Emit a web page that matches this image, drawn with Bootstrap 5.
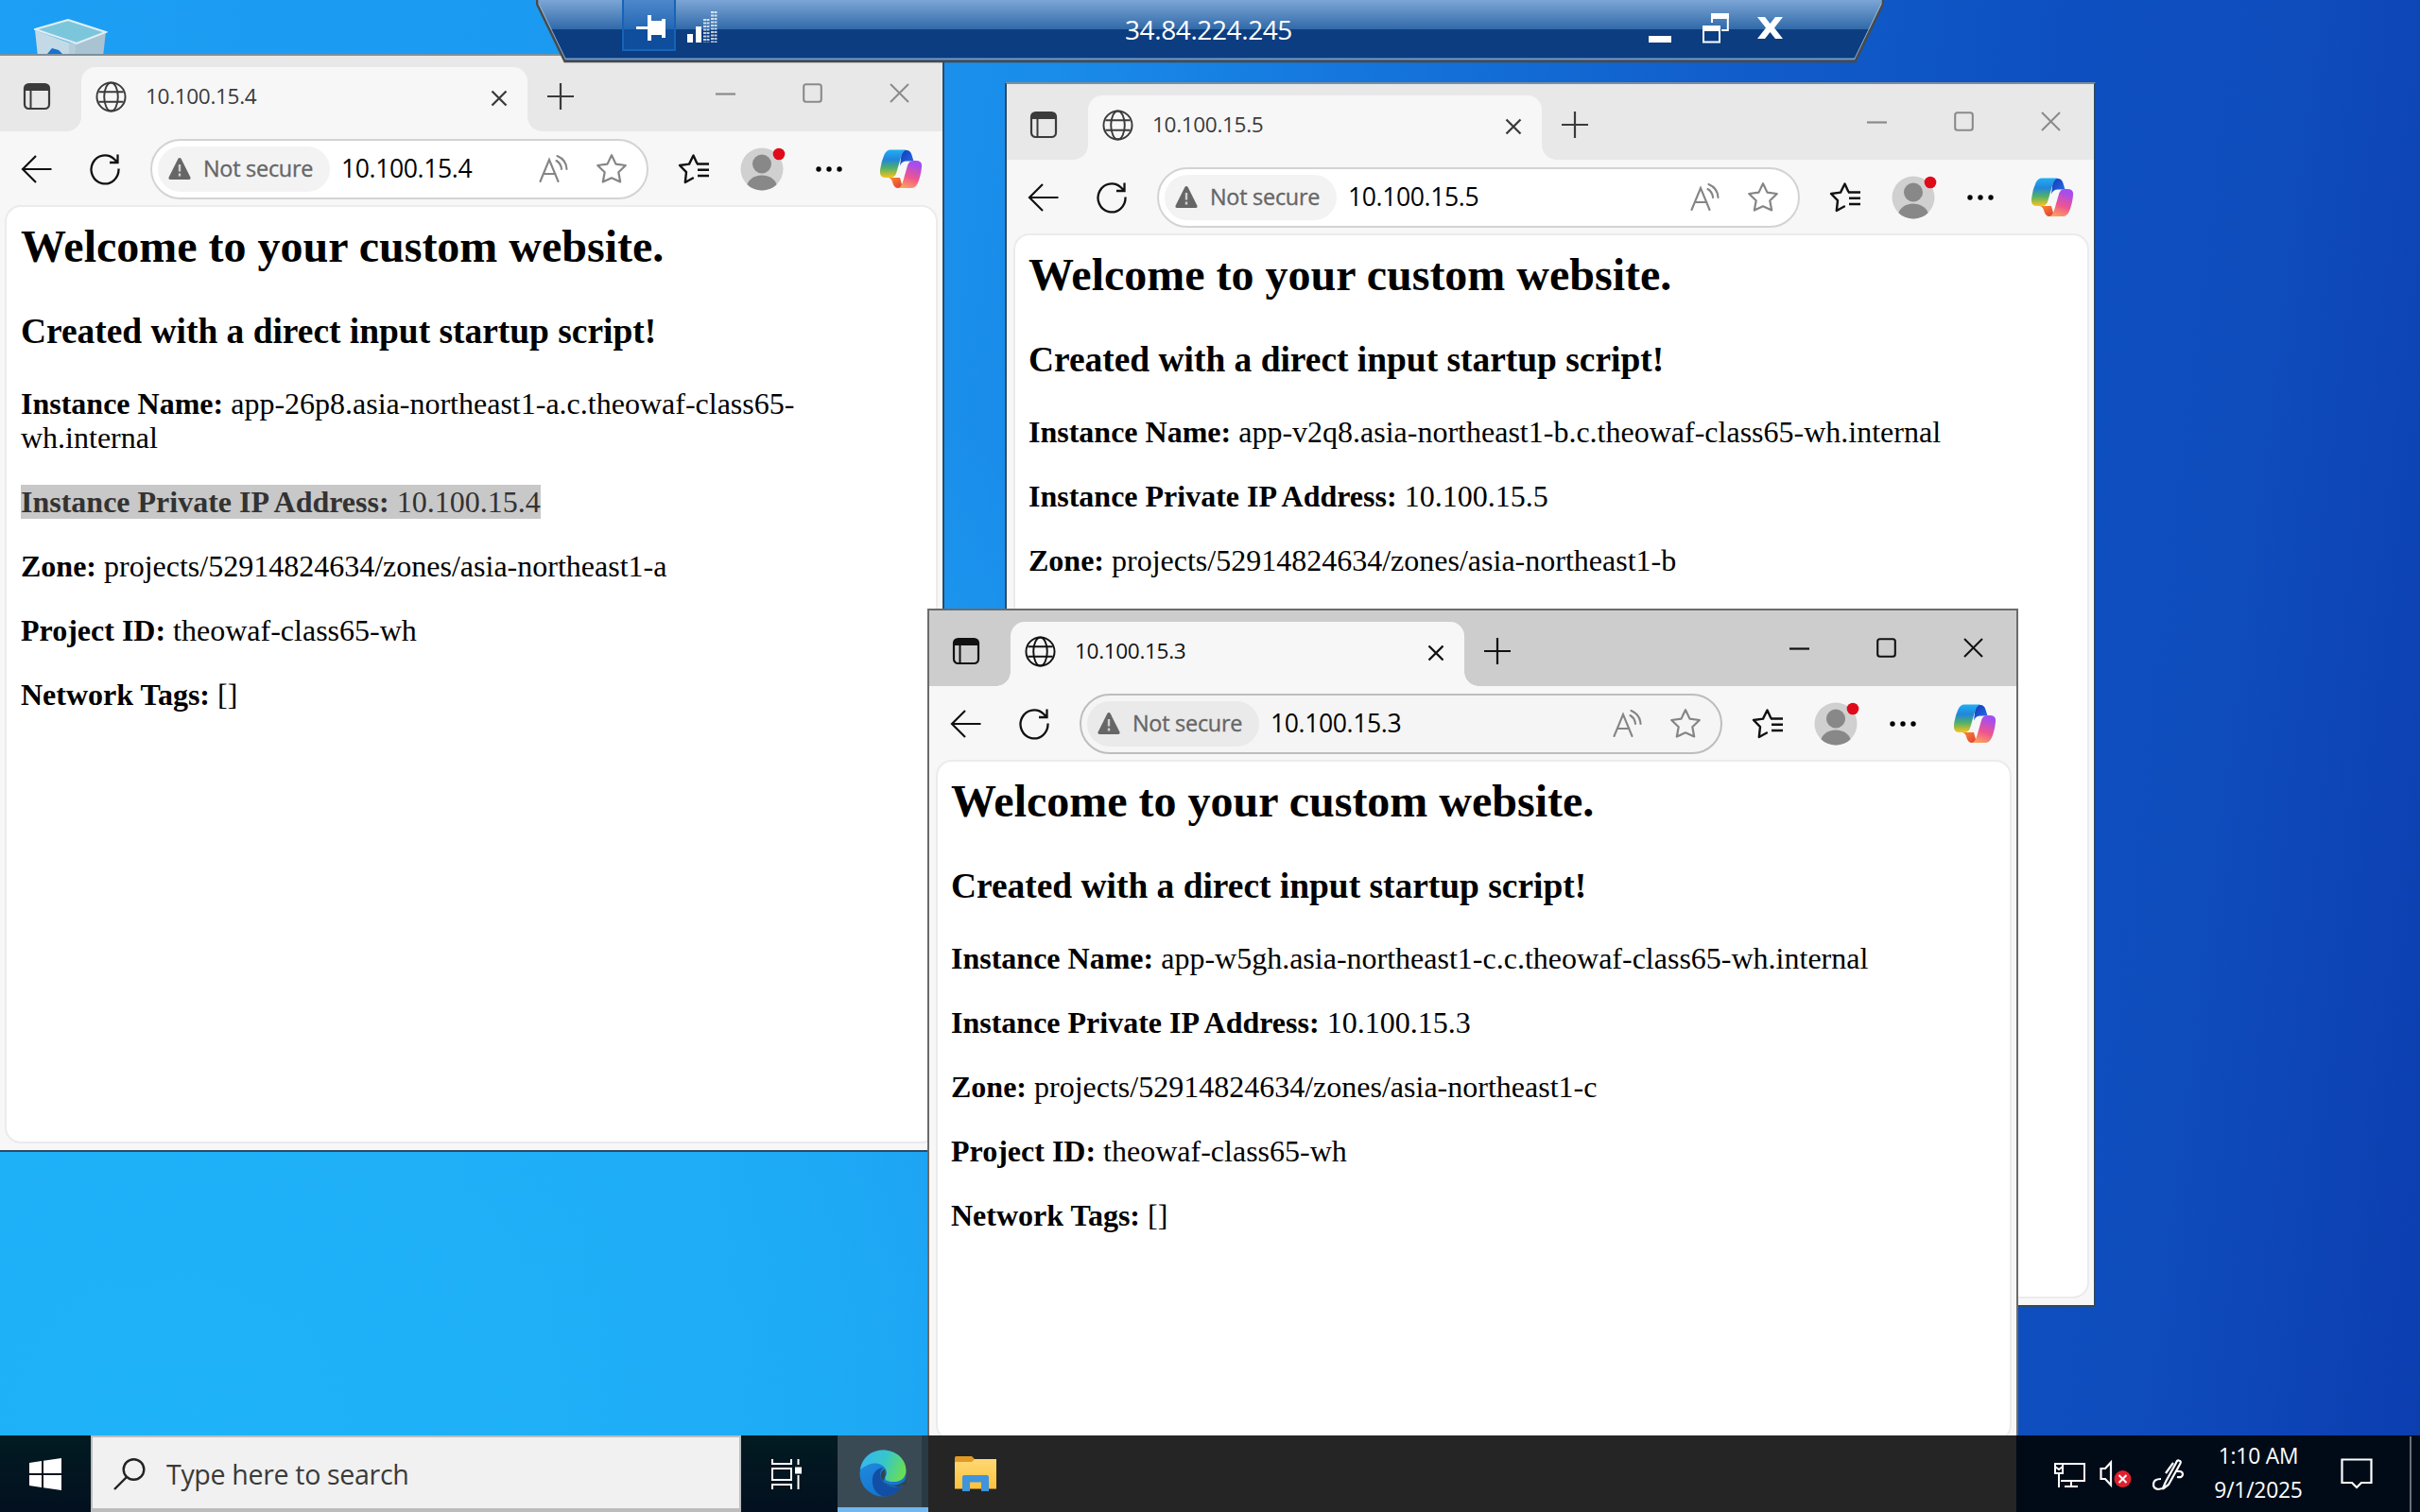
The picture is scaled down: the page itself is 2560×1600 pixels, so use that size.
<!DOCTYPE html>
<html lang="en">
<head>
<meta charset="utf-8">
<meta name="viewport" content="width=device-width, initial-scale=1">
<title>34.84.224.245</title>
<link href="https://cdn.jsdelivr.net/npm/bootstrap@5.3.0/dist/css/bootstrap.min.css" rel="stylesheet">
<style>
  body { width: 2560px; height: 1600px; overflow: hidden; font-family: "Open Sans", "Noto Sans", sans-serif; }
  svg { display: block; flex: none; }
  .desktop { width: 2560px; height: 1519px;
    background:
      radial-gradient(ellipse 1500px 1250px at 200px 1500px, rgba(31,180,249,.95) 0, rgba(31,178,248,.8) 45%, rgba(32,176,248,0) 100%),
      linear-gradient(97deg, #1c9ff4 0%, #1b98f0 28%, #1a8cea 41%, #1577dd 52%, #115fcc 66%, #0d4fc0 80%, #0f4dbd 88%, #0c3eb0 100%); }

  /* desktop windows */
  .win { position: absolute; border: 2px solid #2c4a66; border-top-color: #7d8f9c; background: #f7f7f7; color: #3b3b3b; --strip: #e8e8e8; --ctl: #8a8a8a; }
  .win-a { left: -2px; top: 57px; width: 1001px; height: 1162px; --tabw: 472px; }
  .win-b { left: 1063px; top: 87px; width: 1154px; height: 1296px; --tabw: 480px; }
  .win-c { left: 981px; top: 644px; width: 1154px; height: 890px; border-color: #6b6b6b; color: #111; --strip: #cdcdcd; --ctl: #111; --tabw: 480px; }
  .strip { height: 80px; background: var(--strip); padding-left: 24px; }
  .tab-icon { width: 62px; padding-top: 6px; }
  .tab-main { position: relative; width: var(--tabw); height: 68px; background: #f7f7f7; border-radius: 15px 15px 0 0; padding: 0 21px 6px 15px; font-size: 22.6px; letter-spacing: -.35px; }
  .tab-main::before, .tab-main::after { content: ""; position: absolute; bottom: 0; width: 15px; height: 15px; }
  .tab-main::before { left: -15px; background: radial-gradient(circle at 0 0, transparent 14.5px, #f7f7f7 15px); }
  .tab-main::after { right: -15px; background: radial-gradient(circle at 100% 0, transparent 14.5px, #f7f7f7 15px); }
  .plus { margin: 5px 0 0 21px; }
  .tab-x { margin-top: 4px; }
  .winctl { color: var(--ctl); gap: 71px; padding: 0 35px 2px 0; }
  .tools { height: 78px; padding: 1px 22px 0 22px; color: #111; }
  .reload { margin-left: 39px; }
  .who { margin: 0 8px 0 32px; }
  .copilot { margin-left: 40px; }
  .omni { height: 64px; margin-left: 31px; margin-right: 31px; border: 2px solid #d3d3d3; border-radius: 32px; background: #fff; padding: 0 20px 0 6px; }
  .chip { height: 48px; width: 182px; border-radius: 24px; background: #f3f3f3; color: #666; font-size: 23.4px; -webkit-text-stroke: .35px #666; letter-spacing: -.25px; padding-left: 11px; gap: 13px; }
  .win-c .omni { background: #f5f5f5; border-color: #bdbdbd; }
  .win-c .chip { background: #eaeaea; }
  .url { font-size: 26.6px; letter-spacing: -.4px; margin-left: 12px; color: #000; }
  .gray { color: #858585; }
  .page { margin: 0 5px 7px 7px; border: 2px solid #ebebeb; border-radius: 17px; background: #fff; padding: 15px 14px 0 14px; color: #000;
    font-family: "Liberation Serif", serif; font-size: 32px; line-height: 36px; }
  .win-a .page { margin-left: 5px; padding-left: 15px; }
  .page h2 { font-size: 48px; line-height: 54px; font-weight: 700; margin: 0 0 42px; }
  .page h3 { font-size: 37.44px; line-height: 42px; font-weight: 700; margin: 0 0 37px; }
  .page p { margin: 0 0 32px; }
  .sel { background: #c8c8c8; color: #333; display: inline-block; height: 36px; }

  /* remote session bar */
  .rdp { position: absolute; left: 567px; top: 0; width: 1426px; height: 67px; color: #fff; }
  .rdp-bg { position: absolute; left: 0; top: 0; }
  .rdp-in { position: relative; height: 67px; }
  .rdp-in .pin { width: 57px; height: 54px; margin-left: 91px; background: rgba(20,100,190,.45); border: 2px solid #1763b8; border-top: 0; padding: 14px 0 0 13px; }
  .rdp-signal { margin: 12px 0 0 12px; }
  .rdp-title { font-size: 28px; letter-spacing: -.4px; margin: 10px 0 0 431px; }
  .rdp-ctl { margin-right: 107px; }
  .rdp-ctl .lo { margin: 38px 33px 0 0; }
  .rdp-ctl .mid { margin: 14px 30px 0 0; }
  .rdp-ctl .hi { margin-top: 18px; }
  .bin { position: absolute; left: 36px; top: 20px; }

  /* taskbar */
  .taskbar { position: relative; height: 81px; background: #252525; color: #fff; }
  .tk-dark { background: linear-gradient(180deg, #021b22, #03101f); height: 81px; }
  .tk-start { width: 96px; }
  .tk-view { width: 102px; padding-left: 31px; }
  .tk-search { width: 688px; height: 81px; background: #f1f1f1; border: 2px solid #bcbcbc; border-bottom-width: 4px; color: #3a3a3a; font-size: 28.6px; letter-spacing: -.35px; padding: 3px 0 0 22px; gap: 22px; }
  .tk-edge { width: 96px; height: 81px; background: linear-gradient(90deg, #3a4a54 0 89px, #2a3a44 89px); border-bottom: 5px solid #72b8f0; padding-left: 23px; }
  .tk-folder { margin-left: 28px; }
  .tk-tray { width: 427px; height: 81px; background: #010b18; padding: 2px 0 0 40px; }
  .snd { margin-left: 14px; }
  .pen { margin-left: 22px; }
  .clock { font-size: 22.8px; line-height: 36px; letter-spacing: -.2px; width: 120px; margin: -4px 0 0 18px; }
  .note { margin: -2px 0 0 27px; }
  .peek { width: 2px; height: 81px; background: #6a7078; margin-right: 9px; }
</style>
<script src="https://cdn.jsdelivr.net/npm/bootstrap@5.3.0/dist/js/bootstrap.bundle.min.js"></script>
</head>
<body>

<svg width="0" height="0" class="position-absolute" aria-hidden="true">
  <defs>
    <linearGradient id="cpL" x1="0" y1="0" x2="0" y2="1"><stop offset="0" stop-color="#1fb0f2"/><stop offset=".35" stop-color="#2285dc"/><stop offset=".65" stop-color="#4fb06a"/><stop offset="1" stop-color="#fcc419"/></linearGradient>
    <linearGradient id="cpR" x1=".3" y1="0" x2="0" y2="1"><stop offset="0" stop-color="#a54df0"/><stop offset=".5" stop-color="#ee5490"/><stop offset="1" stop-color="#ffaf52"/></linearGradient>
    <linearGradient id="cpT" x1="0" y1="0" x2="1" y2="1"><stop offset="0" stop-color="#1136b8"/><stop offset="1" stop-color="#2a75ea"/></linearGradient>
    <linearGradient id="cpB" x1="0" y1="0" x2="1" y2="1"><stop offset="0" stop-color="#ff8a2a"/><stop offset="1" stop-color="#dc3a3c"/></linearGradient>
    <linearGradient id="edA" x1="0" y1=".3" x2="1" y2=".6"><stop offset="0" stop-color="#35b8f1"/><stop offset=".5" stop-color="#37c6c9"/><stop offset="1" stop-color="#6be04e"/></linearGradient>
    <linearGradient id="edB" x1="0" y1="0" x2=".6" y2="1"><stop offset="0" stop-color="#2390e0"/><stop offset="1" stop-color="#1272d0"/></linearGradient>
    <linearGradient id="fold" x1="0" y1="0" x2="0" y2="1"><stop offset="0" stop-color="#ffd874"/><stop offset="1" stop-color="#fbc23c"/></linearGradient>
    <linearGradient id="barTop" x1="0" y1="0" x2="0" y2="1"><stop offset="0" stop-color="#7ba5d5"/><stop offset=".45" stop-color="#5b8bc2"/><stop offset="1" stop-color="#3069a8"/></linearGradient>
  </defs>
  <symbol id="i-tabs" viewBox="0 0 30 30"><rect x="2" y="2" width="26" height="26" rx="4.5" fill="none" stroke="currentColor" stroke-width="2.2"/><path d="M2 9V6q0-4 4-4h18q4 0 4 4v3z" fill="currentColor"/><path d="M8.5 8v20" stroke="currentColor" stroke-width="2"/></symbol>
  <symbol id="i-globe" viewBox="0 0 34 34"><g fill="none" stroke="currentColor" stroke-width="2"><circle cx="17" cy="17" r="15.500"/><ellipse cx="17" cy="17" rx="7.500" ry="15.500"/><path d="M3.500 11.500h27M3.500 22.500h27"/></g></symbol>
  <symbol id="i-x" viewBox="0 0 18 18"><path d="M1.500 1.500l15 15M16.500 1.500l-15 15" stroke="currentColor" stroke-width="2.300"/></symbol>
  <symbol id="i-plus" viewBox="0 0 28 28"><path d="M14 0v28M0 14h28" stroke="currentColor" stroke-width="2.200"/></symbol>
  <symbol id="i-min" viewBox="0 0 21 21"><path d="M0 11.500h21" stroke="currentColor" stroke-width="2.200"/></symbol>
  <symbol id="i-max" viewBox="0 0 21 21"><rect x="1.200" y="1.200" width="18.600" height="18.600" rx="2.500" fill="none" stroke="currentColor" stroke-width="2.100"/></symbol>
  <symbol id="i-close" viewBox="0 0 21 21"><path d="M1 1l19 19M20 1L1 20" stroke="currentColor" stroke-width="2"/></symbol>
  <symbol id="i-back" viewBox="0 0 32 32"><path d="M15.500 2L1.500 16l14 14M2 16h30" fill="none" stroke="currentColor" stroke-width="2.200"/></symbol>
  <symbol id="i-reload" viewBox="0 0 34 34"><path d="M31.500 16.500A14.500 15 0 1 1 27 6.500l3.500 3.500M30.500 1.500V10H22" fill="none" stroke="currentColor" stroke-width="2.300"/></symbol>
  <symbol id="i-warn" viewBox="0 0 24 23"><path d="M12 0q1 0 1.600 1.100l9.900 19.600Q24 23 22 23H2Q0 23 .5 20.700L10.400 1.100Q11 0 12 0z" fill="currentColor"/><path d="M12 7v7.500M12 16.500v3" stroke="#cfcfcf" stroke-width="2.400"/></symbol>
  <symbol id="i-read" viewBox="0 0 32 30"><g fill="none" stroke="currentColor" stroke-width="2.100" stroke-linecap="round"><path d="M1.500 28L11 5l9.500 23M5 20h12.500M18.500 6q5 3 5.500 9M19.500 1q9.500 4 10 14"/></g></symbol>
  <symbol id="i-star" viewBox="0 0 34 33"><path d="M17 2.200l4.500 9.400 10.300 1.400-7.500 7.200 1.900 10.300L17 26.300 7.800 30.500l1.900-10.300L2.200 13l10.300-1.400z" fill="none" stroke="currentColor" stroke-width="2.200" stroke-linejoin="round"/></symbol>
  <symbol id="i-favs" viewBox="0 0 34 33"><path d="M20.500 11.200L16.500 2.500 12 11.600 2 13l7 7.200L7.800 31l9-5" fill="none" stroke="currentColor" stroke-width="2.400" stroke-linejoin="round"/><path d="M20 11.500h13M21 17.700h12M21 24h12" stroke="currentColor" stroke-width="2.600"/></symbol>
  <symbol id="i-user" viewBox="0 0 48 46"><clipPath id="uc"><circle cx="23" cy="23" r="22.500"/></clipPath><circle cx="23" cy="23" r="22.500" fill="#d0d0d0"/><g clip-path="url(#uc)" fill="#888"><circle cx="23" cy="17.500" r="10"/><ellipse cx="23" cy="42" rx="16" ry="12.500"/></g><circle cx="41" cy="7" r="6.300" fill="#e00b1a"/></symbol>
  <symbol id="i-dots" viewBox="0 0 28 6"><g fill="#000"><circle cx="3" cy="3" r="2.700"/><circle cx="14" cy="3" r="2.700"/><circle cx="25" cy="3" r="2.700"/></g></symbol>
  <symbol id="i-copilot" viewBox="0 0 44 42"><path d="M23 1h5q4 0 5.500 5l2 6.500H28q-5 0-7 5z" fill="url(#cpT)"/><path d="M9 30h12l3 11h-5q-4 0-5.500-5-1-5-4.500-6z" fill="url(#cpB)"/><path d="M11 .5h17q-4 1-6 8L17.500 24q-1.500 6-6.500 6H6q-7 0-6-8 1-9 4.500-16.500Q7 .5 11 .5z" fill="url(#cpL)"/><path d="M33 41H19q3.500-1 5.500-8l4-14q1.500-7 6.500-7H38q7 0 6 7-1 10-4.500 17.500Q37 41 33 41z" fill="url(#cpR)"/></symbol>
</svg>

<main class="desktop position-relative overflow-hidden">
  <svg class="bin" width="78" height="40" viewBox="0 0 78 40"><path d="M1 12l36 13 1 15H4z" fill="#c3d9e6"/><path d="M76 13L45 26l-3 14h31z" fill="#a9c3d2"/><path d="M37 25l8 1-2 14h-6z" fill="#b5cddb"/><path d="M1 11L36 1l40 13-31 12z" fill="#7cc6dc" stroke="#e2eef3" stroke-width="2"/><path d="M14 37l5-6 7 2 5 5v2H16z" fill="#1672cf"/></svg>

  <section class="win win-a d-flex flex-column">
    <header class="strip d-flex align-items-center">
      <div class="tab-icon"><svg width="30" height="30"><use href="#i-tabs"/></svg></div>
      <div class="tab-main d-flex align-items-center align-self-end"><svg width="33" height="33" class="me-3"><use href="#i-globe"/></svg><span class="ms-1">10.100.15.4</span><svg class="tab-x ms-auto" width="18" height="18"><use href="#i-x"/></svg></div>
      <svg class="plus" width="28" height="28"><use href="#i-plus"/></svg>
      <div class="winctl d-flex ms-auto"><svg width="21" height="21"><use href="#i-min"/></svg><svg width="21" height="21"><use href="#i-max"/></svg><svg width="21" height="21"><use href="#i-close"/></svg></div>
    </header>
    <div class="tools d-flex align-items-center">
      <svg width="33" height="32"><use href="#i-back"/></svg>
      <svg class="reload" width="34" height="34"><use href="#i-reload"/></svg>
      <div class="omni d-flex align-items-center flex-grow-1">
        <div class="chip d-flex align-items-center"><svg width="24" height="23"><use href="#i-warn"/></svg>Not secure</div>
        <span class="url me-auto">10.100.15.4</span>
        <svg class="gray me-4" width="32" height="30"><use href="#i-read"/></svg><svg class="gray ms-1" width="34" height="33"><use href="#i-star"/></svg>
      </div>
      <svg width="34" height="33"><use href="#i-favs"/></svg><svg class="who" width="48" height="46"><use href="#i-user"/></svg><svg class="ms-4" width="28" height="6"><use href="#i-dots"/></svg><svg class="copilot" width="44" height="42"><use href="#i-copilot"/></svg>
    </div>
    <article class="page flex-grow-1">
      <h2>Welcome to your custom website.</h2>
      <h3>Created with a direct input startup script!</h3>
      <p><b>Instance Name:</b> app-26p8.asia-northeast1-a.c.theowaf-class65-<br>wh.internal</p>
      <p><span class="sel"><b>Instance Private IP Address:</b> 10.100.15.4</span></p>
      <p><b>Zone:</b> projects/52914824634/zones/asia-northeast1-a</p>
      <p><b>Project ID:</b> theowaf-class65-wh</p>
      <p><b>Network Tags:</b> []</p>
    </article>
  </section>

  <section class="win win-b d-flex flex-column">
    <header class="strip d-flex align-items-center">
      <div class="tab-icon"><svg width="30" height="30"><use href="#i-tabs"/></svg></div>
      <div class="tab-main d-flex align-items-center align-self-end"><svg width="33" height="33" class="me-3"><use href="#i-globe"/></svg><span class="ms-1">10.100.15.5</span><svg class="tab-x ms-auto" width="18" height="18"><use href="#i-x"/></svg></div>
      <svg class="plus" width="28" height="28"><use href="#i-plus"/></svg>
      <div class="winctl d-flex ms-auto"><svg width="21" height="21"><use href="#i-min"/></svg><svg width="21" height="21"><use href="#i-max"/></svg><svg width="21" height="21"><use href="#i-close"/></svg></div>
    </header>
    <div class="tools d-flex align-items-center">
      <svg width="33" height="32"><use href="#i-back"/></svg>
      <svg class="reload" width="34" height="34"><use href="#i-reload"/></svg>
      <div class="omni d-flex align-items-center flex-grow-1">
        <div class="chip d-flex align-items-center"><svg width="24" height="23"><use href="#i-warn"/></svg>Not secure</div>
        <span class="url me-auto">10.100.15.5</span>
        <svg class="gray me-4" width="32" height="30"><use href="#i-read"/></svg><svg class="gray ms-1" width="34" height="33"><use href="#i-star"/></svg>
      </div>
      <svg width="34" height="33"><use href="#i-favs"/></svg><svg class="who" width="48" height="46"><use href="#i-user"/></svg><svg class="ms-4" width="28" height="6"><use href="#i-dots"/></svg><svg class="copilot" width="44" height="42"><use href="#i-copilot"/></svg>
    </div>
    <article class="page flex-grow-1">
      <h2>Welcome to your custom website.</h2>
      <h3>Created with a direct input startup script!</h3>
      <p><b>Instance Name:</b> app-v2q8.asia-northeast1-b.c.theowaf-class65-wh.internal</p>
      <p><b>Instance Private IP Address:</b> 10.100.15.5</p>
      <p><b>Zone:</b> projects/52914824634/zones/asia-northeast1-b</p>
    </article>
  </section>

  <section class="win win-c d-flex flex-column">
    <header class="strip d-flex align-items-center">
      <div class="tab-icon"><svg width="30" height="30"><use href="#i-tabs"/></svg></div>
      <div class="tab-main d-flex align-items-center align-self-end"><svg width="33" height="33" class="me-3"><use href="#i-globe"/></svg><span class="ms-1">10.100.15.3</span><svg class="tab-x ms-auto" width="18" height="18"><use href="#i-x"/></svg></div>
      <svg class="plus" width="28" height="28"><use href="#i-plus"/></svg>
      <div class="winctl d-flex ms-auto"><svg width="21" height="21"><use href="#i-min"/></svg><svg width="21" height="21"><use href="#i-max"/></svg><svg width="21" height="21"><use href="#i-close"/></svg></div>
    </header>
    <div class="tools d-flex align-items-center">
      <svg width="33" height="32"><use href="#i-back"/></svg>
      <svg class="reload" width="34" height="34"><use href="#i-reload"/></svg>
      <div class="omni d-flex align-items-center flex-grow-1">
        <div class="chip d-flex align-items-center"><svg width="24" height="23"><use href="#i-warn"/></svg>Not secure</div>
        <span class="url me-auto">10.100.15.3</span>
        <svg class="gray me-4" width="32" height="30"><use href="#i-read"/></svg><svg class="gray ms-1" width="34" height="33"><use href="#i-star"/></svg>
      </div>
      <svg width="34" height="33"><use href="#i-favs"/></svg><svg class="who" width="48" height="46"><use href="#i-user"/></svg><svg class="ms-4" width="28" height="6"><use href="#i-dots"/></svg><svg class="copilot" width="44" height="42"><use href="#i-copilot"/></svg>
    </div>
    <article class="page flex-grow-1">
      <h2>Welcome to your custom website.</h2>
      <h3>Created with a direct input startup script!</h3>
      <p><b>Instance Name:</b> app-w5gh.asia-northeast1-c.c.theowaf-class65-wh.internal</p>
      <p><b>Instance Private IP Address:</b> 10.100.15.3</p>
      <p><b>Zone:</b> projects/52914824634/zones/asia-northeast1-c</p>
      <p><b>Project ID:</b> theowaf-class65-wh</p>
      <p><b>Network Tags:</b> []</p>
    </article>
  </section>

  <div class="rdp">
    <svg class="rdp-bg" width="1426" height="67" viewBox="0 0 1426 67">
      <clipPath id="trap"><path d="M1 0v4l29.500 61h1365L1425 4V0z"/></clipPath>
      <g clip-path="url(#trap)"><rect width="1426" height="67" fill="#0c3d80"/><rect width="1426" height="31" fill="url(#barTop)"/><path d="M30 62.500h1366" stroke="#7aa0cc" stroke-width="2"/></g>
      <path d="M1 0v4l29.500 61h1365L1425 4V0" fill="none" stroke="#4a4a48" stroke-width="2.500"/>
      <path d="M3 4l28 58M1423 4l-28 58" stroke="#9ab4cf" stroke-width="1"/>
    </svg>
    <div class="rdp-in d-flex">
      <div class="pin"><svg width="32" height="31" viewBox="0 0 32 31"><path d="M0 15.500h13" stroke="#fff" stroke-width="3"/><path d="M12 2h4v6h11V6h4v20h-4v-3H16v6h-4z" fill="#fff"/></svg></div>
      <svg class="rdp-signal" width="32" height="34" viewBox="0 0 32 34"><path d="M0 24h6v9H0zM9 16h6v17H9z" fill="#fff"/><path d="M18.500 8v25M22 8v25M26.500 0v33M30 0v33" stroke="#fff" stroke-width="3" stroke-dasharray="2 1.500" opacity=".75"/></svg>
      <div class="rdp-title">34.84.224.245</div>
      <div class="rdp-ctl ms-auto d-flex">
        <svg class="lo" width="24" height="8"><rect width="24" height="7" fill="#fff"/></svg>
        <svg class="mid" width="28" height="32" viewBox="0 0 28 32"><path d="M10 10V1.200h16.800V18H20" fill="none" stroke="#fff" stroke-width="2"/><path d="M9 0h19v6H9zM0 13h19v6H0z" fill="#fff"/><path d="M1 14h17v16.500H1z" fill="none" stroke="#fff" stroke-width="2"/></svg>
        <svg class="hi" width="27" height="23" viewBox="0 0 27 23"><path d="M0 0h8l5.500 7L19 0h8l-9 11.500L27 23h-8l-5.500-7L8 23H0l9-11.500z" fill="#fff"/></svg>
      </div>
    </div>
  </div>
</main>

<footer class="taskbar d-flex align-items-center">
  <div class="tk-dark tk-start d-flex align-items-center justify-content-center"><svg width="34" height="34" viewBox="0 0 34 34"><path d="M0 5l13-2v13H0zM15 2.700L34 0v16H15zM0 18h13v13L0 29zM15 18h19v16l-19-2.700z" fill="#fff"/></svg></div>
  <div class="tk-search d-flex align-items-center"><svg width="34" height="34" viewBox="0 0 34 34"><g fill="none" stroke="#222" stroke-width="2.400"><circle cx="21.500" cy="12" r="10.800"/><path d="M14 20L1 33"/></g></svg><span>Type here to search</span></div>
  <div class="tk-dark tk-view d-flex align-items-center"><svg width="34" height="32" viewBox="0 0 34 32"><g fill="none" stroke="#fff" stroke-width="2"><path d="M2 0v5h20V0M2 10h20v12H2zM2 32v-5h20v5M29.500 0v6M29.500 17v15"/></g><path d="M26 8.500h7v7h-7z" fill="#fff"/></svg></div>
  <div class="tk-edge d-flex align-items-center"><svg width="50" height="50" viewBox="0 0 50 50" class="mt-1"><circle cx="25" cy="25" r="24.500" fill="url(#edB)"/><path d="M1 21C3 8 13 .5 25 .5 39 .5 49.500 10 49.500 22c0 7-5 12-12 12-8 0-11-2-10-5 2-3 2-6 0-9C24 14 14 11 1 21z" fill="url(#edA)"/><path d="M14 34c-1-8 4-15 12-15-5 3-5 10-1 15 5 6 14 7 21 4-5 8-13 11.500-20 11.500C19 48 14 42 14 34z" fill="#124fa4"/><path d="M28 20.500c-5 1-6 6-5 9 2 6 9 9.500 18 7.500 3-.7 5-2 8.500-5.500l.5 5-4 1c-3 2-6 2-9 1-9 0-12-4-11-7 2-3 2-7 1-11z" fill="#33444f"/></svg></div>
  <svg class="tk-folder" width="44" height="38" viewBox="0 0 44 38"><path d="M0 1.500Q0 0 1.500 0H18l3 3v4H0z" fill="#e09a23"/><path d="M0 6h18l3-3h23v31.500H0z" fill="url(#fold)"/><path d="M8 37V22q0-2 2-2h24q2 0 2 2v15h-8v-9.500H16V37z" fill="#3f94dc"/></svg>
  <div class="tk-tray ms-auto d-flex align-items-center">
    <svg width="34" height="28" viewBox="0 0 34 28"><g fill="none" stroke="#fff" stroke-width="2"><path d="M10 2h22v18H7M18 20v6M11 26h14M1 2h8v10H1zM5 12v15"/><path d="M1 5l4 3 4-3"/></g></svg>
    <svg class="snd" width="34" height="31" viewBox="0 0 34 31"><path d="M1.500 9H6l6-6.500v24L6 20H1.500z" fill="none" stroke="#fff" stroke-width="2.200"/><circle cx="24.500" cy="20" r="9" fill="#e0202c"/><path d="M20.500 16l8 8M28.500 16l-8 8" stroke="#fff" stroke-width="2"/></svg>
    <svg class="pen" width="34" height="34" viewBox="0 0 34 34"><g fill="none" stroke="#fff" stroke-width="2.200"><path d="M9 21q-8 0-8 6 0 4 5 5l5-1 3-7L25 4q1-3 3-2.500 3 .5 1 4L17 27l-6 4.500M14 15l8-11"/><path d="M25 13q7-1 7 3t-6 3"/></g></svg>
    <div class="clock text-center">1:10 AM<br>9/1/2025</div>
    <svg class="note" width="34" height="33" viewBox="0 0 34 33"><path d="M1.500 1.500h31V26H22l-5 5-5-5H1.500z" fill="none" stroke="#fff" stroke-width="2.200"/></svg>
    <div class="peek ms-auto"></div>
  </div>
</footer>
</body>
</html>
